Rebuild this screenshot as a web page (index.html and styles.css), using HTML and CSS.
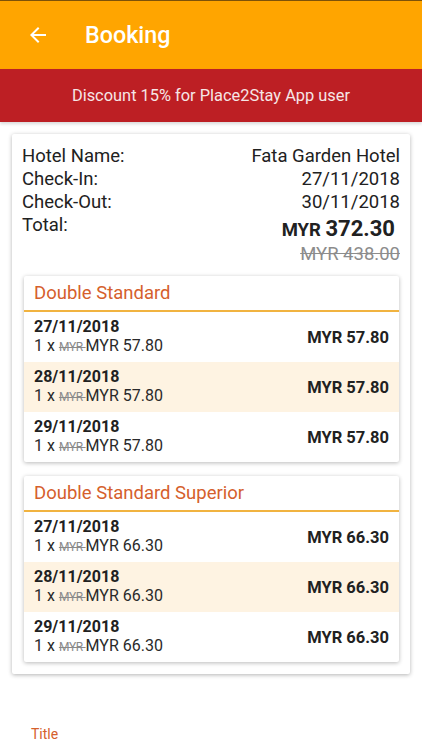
FILE: index.html
```html
<!DOCTYPE html>
<html>
<head>
<meta charset="utf-8">
<link rel="stylesheet" href="styles.css">
</head>
<body>
<header class="appbar">
  <svg class="back" width="24" height="24" viewBox="0 0 24 24"><path d="M20 11H7.83l5.59-5.59L12 4l-8 8 8 8 1.41-1.41L7.83 13H20v-2z" fill="#fff"/></svg>
  <span class="title">Booking</span>
</header>
<div class="banner">Discount 15% for Place2Stay App user</div>
<main class="content">
  <section class="card">
    <div class="info-row"><span>Hotel Name:</span><span>Fata Garden Hotel</span></div>
    <div class="info-row"><span>Check-In:</span><span>27/11/2018</span></div>
    <div class="info-row"><span>Check-Out:</span><span>30/11/2018</span></div>
    <div class="info-row total-row">
      <span>Total:</span>
      <div class="total">
        <div class="total-now"><span class="cur">MYR</span> <span class="amt">372.30</span></div>
        <div class="total-old">MYR 438.00</div>
      </div>
    </div>

    <div class="room">
      <div class="room-head">Double Standard</div>
      <div class="night"><div><div class="date">27/11/2018</div><div class="sub">1 x <s>MYR </s>MYR 57.80</div></div><div class="price">MYR 57.80</div></div>
      <div class="night alt"><div><div class="date">28/11/2018</div><div class="sub">1 x <s>MYR </s>MYR 57.80</div></div><div class="price">MYR 57.80</div></div>
      <div class="night"><div><div class="date">29/11/2018</div><div class="sub">1 x <s>MYR </s>MYR 57.80</div></div><div class="price">MYR 57.80</div></div>
    </div>

    <div class="room">
      <div class="room-head">Double Standard Superior</div>
      <div class="night"><div><div class="date">27/11/2018</div><div class="sub">1 x <s>MYR </s>MYR 66.30</div></div><div class="price">MYR 66.30</div></div>
      <div class="night alt"><div><div class="date">28/11/2018</div><div class="sub">1 x <s>MYR </s>MYR 66.30</div></div><div class="price">MYR 66.30</div></div>
      <div class="night"><div><div class="date">29/11/2018</div><div class="sub">1 x <s>MYR </s>MYR 66.30</div></div><div class="price">MYR 66.30</div></div>
    </div>
  </section>
  <div class="footer-title">Title</div>
</main>
</body>
</html>
```
FILE: styles.css
```css
* { box-sizing: border-box; }
html, body { margin: 0; padding: 0; background: #fff; }
body { font-family: Roboto, "Noto Sans", sans-serif; color: #212121; width: 422px; }

.appbar {
  height: 69px;
  background: #FFA500;
  border-top: 1px solid #7d5208;
  display: flex;
  align-items: center;
  padding-left: 26px;
  gap: 35px;
  color: #fff;
}
.back { display: block; }
.appbar .title { font-size: 23.3px; font-weight: 500; }

.banner {
  background: #BD1F24;
  height: 53px;
  display: flex;
  align-items: center;
  justify-content: center;
  color: #f6e6e6;
  font-size: 16.4px;
  box-shadow: 0 2px 3px rgba(0,0,0,0.15);
}

.content { padding: 12px 12px 0; }

.card {
  background: #fff;
  box-shadow: 0 1px 4px rgba(0,0,0,0.3);
  border-radius: 2px;
  padding: 11px 10px 12px;
}

.info-row {
  display: flex;
  justify-content: space-between;
  font-size: 18.5px;
  line-height: 23px;
}
.total-row { align-items: flex-start; }
.total { text-align: right; }
.total-now { font-weight: 700; line-height: 28px; margin-top: 1px; padding-right: 5px; }
.total-now .cur { font-size: 18.5px; }
.total-now .amt { font-size: 22px; }
.total-old { color: #8c8c8c; text-decoration: line-through; font-size: 18.5px; line-height: 21px; }

.room {
  margin: 11px 1px 0 2px;
  background: #fff;
  border-radius: 2px;
  box-shadow: 0 1px 4px rgba(0,0,0,0.28);
}
.room + .room { margin-top: 14px; }
.room-head {
  height: 36px;
  padding: 0 10px;
  display: flex;
  align-items: center;
  color: #D5602C;
  font-size: 18.5px;
  border-bottom: 2px solid #F1B340;
}
.night {
  height: 50px;
  padding: 0 10px;
  display: flex;
  align-items: center;
  justify-content: space-between;
}
.night.alt { background: #FEF3E2; }
.date { font-weight: 700; font-size: 16px; line-height: 19px; }
.sub { font-size: 16px; line-height: 19px; color: #2a2a2a; }
.sub s { color: #8a8a8a; font-size: 12px; letter-spacing: -0.3px; }
.price { font-weight: 700; font-size: 16.5px; }

.footer-title {
  margin-top: 52px;
  padding-left: 19px;
  color: #D5602C;
  font-size: 14px;
}
```
